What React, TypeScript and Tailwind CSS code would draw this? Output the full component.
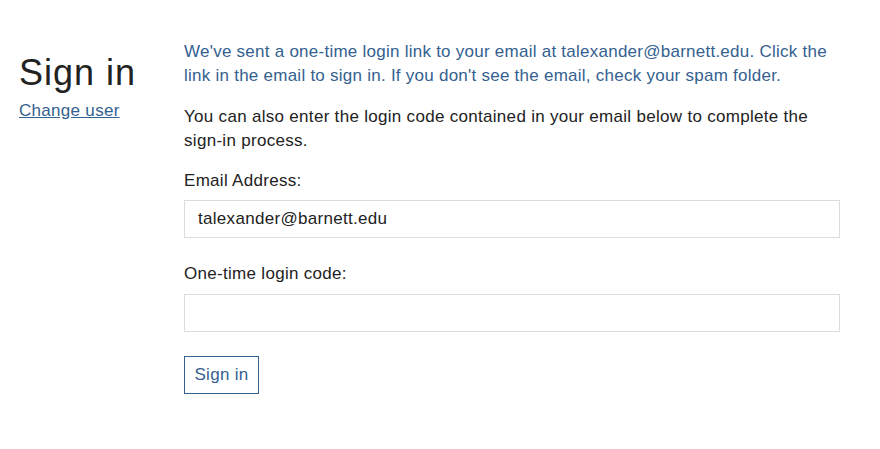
import React from "react";

export default function App() {
  return (
    <div className="min-h-screen bg-white font-['Liberation_Sans',Arial,sans-serif] text-[#222]">
      <div className="flex pt-[40px]">
        <div className="w-[184px] shrink-0 pl-[19px]">
          <h1 className="mt-[11px] text-[36px] leading-[44px] tracking-[1px] text-[#222] font-normal">Sign in</h1>
          <a href="#" className="block mt-[6px] text-[17px] leading-[20px] tracking-[0.3px] text-[#34618f] underline">
            Change user
          </a>
        </div>
        <div className="w-[656px]">
          <p className="text-[17px] leading-[24px] tracking-[0.25px] text-[#34618f]">
            We've sent a one-time login link to your email at talexander@barnett.edu. Click the link in the email to sign in. If you don't see the email, check your spam folder.
          </p>
          <p className="mt-[17px] text-[17px] leading-[24px] tracking-[0.3px] text-[#222]">
            You can also enter the login code contained in your email below to complete the sign-in process.
          </p>
          <label className="block mt-[16px] text-[17px] leading-[24px] tracking-[0.3px]">Email Address:</label>
          <input
            className="mt-[7px] block w-full h-[38px] border border-[#dcdcdc] px-[13px] text-[17px] tracking-[0.3px] text-[#222] outline-none"
            defaultValue="talexander@barnett.edu"
          />
          <label className="block mt-[24px] text-[17px] leading-[24px] tracking-[0.3px]">One-time login code:</label>
          <input className="mt-[8px] block w-full h-[38px] border border-[#dcdcdc] px-[13px] text-[17px] outline-none" />
          <button className="mt-[24px] block h-[38px] w-[75px] border border-[#34618f] text-[17px] tracking-[0.3px] text-[#34618f] bg-white">
            Sign in
          </button>
        </div>
      </div>
    </div>
  );
}
